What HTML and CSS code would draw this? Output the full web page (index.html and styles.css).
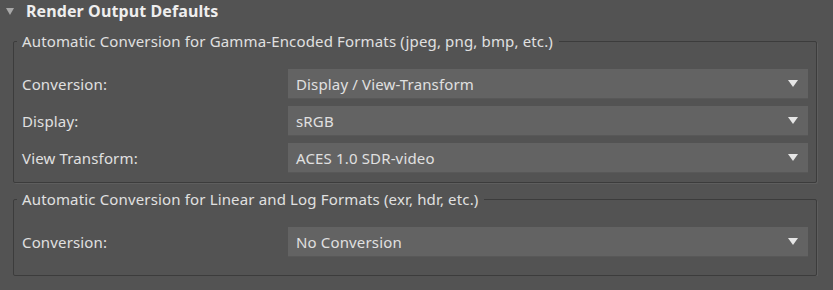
FILE: index.html
```html
<!DOCTYPE html>
<html lang="en">

<head>
  <meta charset="UTF-8">
  <title>Render Output Defaults</title>
  <link rel="stylesheet" href="styles.css">
</head>

<body>
  <div class="rollout">
    <div class="rollout-title">
      <span class="caret"></span>
      <span>Render Output Defaults</span>
    </div>

    <fieldset class="group">
      <legend>Automatic Conversion for Gamma-Encoded Formats (jpeg, png, bmp, etc.)</legend>
      <div class="row">
        <label>Conversion:</label>
        <div class="combo">Display / View-Transform</div>
      </div>
      <div class="row">
        <label>Display:</label>
        <div class="combo">sRGB</div>
      </div>
      <div class="row">
        <label>View Transform:</label>
        <div class="combo">ACES 1.0 SDR-video</div>
      </div>
    </fieldset>

    <fieldset class="group group-last">
      <legend>Automatic Conversion for Linear and Log Formats (exr, hdr, etc.)</legend>
      <div class="row">
        <label>Conversion:</label>
        <div class="combo">No Conversion</div>
      </div>
    </fieldset>
  </div>
</body>

</html>
```

FILE: styles.css
```css
body {
  margin: 0;
  background: #535353;
  color: #e0e0e0;
  font-family: 'Noto Sans', sans-serif;
  font-size: 15px;
  letter-spacing: 0.15px;
}

.rollout {
  padding: 0 16px 0 13px;
}

.rollout-title {
  display: flex;
  align-items: center;
  gap: 12px;
  height: 22px;
  margin-left: -7px;
  font-weight: bold;
  font-size: 16px;
  letter-spacing: 0.1px;
  color: #eeeeee;
}

.caret {
  width: 0;
  height: 0;
  margin-top: 1px;
  border-left: 4px solid transparent;
  border-right: 4px solid transparent;
  border-top: 7px solid #a8a8a8;
}

.group {
  margin: 9px 0 0;
  padding: 18px 8px 9px 8px;
  border: 1px solid #3c3c3c;
  border-radius: 2px;
  box-shadow: 1px 1px 0 #5e5e5e;
  display: flex;
  flex-direction: column;
  gap: 7px;
}

.group + .group {
  margin-top: 6px;
}

.group-last {
  padding-bottom: 18px;
}

.group legend {
  margin-left: -5px;
  padding: 0 6px 0 5px;
  line-height: 20px;
}

.row {
  display: grid;
  grid-template-columns: 266px 1fr;
  align-items: center;
}

.combo {
  position: relative;
  height: 30px;
  line-height: 30px;
  padding-left: 8px;
  background: #636363;
  border-bottom: 1px solid #585858;
  box-sizing: border-box;
}

.combo::after {
  content: "";
  position: absolute;
  right: 10px;
  top: 11px;
  border-left: 5px solid transparent;
  border-right: 5px solid transparent;
  border-top: 7px solid #e6e6e6;
}
```
